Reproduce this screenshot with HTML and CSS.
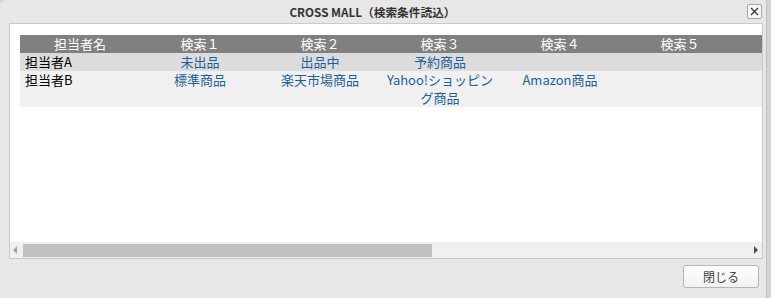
FILE: index.html
```html
<!DOCTYPE html>
<html lang="ja">
<head>
  <meta charset="UTF-8">
  <title>CROSS MALL（検索条件読込）</title>
  <link rel="stylesheet" href="styles.css">
</head>
<body>
  <div class="dialog">
    <div class="titlebar">
      <div class="title">CROSS MALL（検索条件読込）</div>
      <button class="close-x" title="close">
        <svg width="9" height="9" viewBox="0 0 9 9"><path d="M1 1L8 8M8 1L1 8" stroke="#333" stroke-width="1.3"/></svg>
      </button>
    </div>

    <div class="panel">
      <div class="scroll-area">
        <table class="cond-table">
          <thead>
            <tr>
              <th>担当者名</th>
              <th>検索１</th>
              <th>検索２</th>
              <th>検索３</th>
              <th>検索４</th>
              <th>検索５</th>
              <th></th>
              <th></th>
              <th></th>
              <th></th>
              <th></th>
            </tr>
          </thead>
          <tbody>
            <tr class="row-a">
              <td class="name">担当者A</td>
              <td>未出品</td>
              <td>出品中</td>
              <td>予約商品</td>
              <td></td><td></td><td></td><td></td><td></td><td></td><td></td>
            </tr>
            <tr class="row-b">
              <td class="name">担当者B</td>
              <td>標準商品</td>
              <td>楽天市場商品</td>
              <td>Yahoo!ショッピング商品</td>
              <td>Amazon商品</td>
              <td></td><td></td><td></td><td></td><td></td><td></td>
            </tr>
          </tbody>
        </table>
      </div>
      <div class="hscroll">
        <span class="arrow-left"></span>
        <div class="track">
          <div class="thumb"></div>
        </div>
        <span class="arrow-right"></span>
      </div>
    </div>

    <div class="footer">
      <button class="btn">閉じる</button>
    </div>
  </div>
</body>
</html>
```

FILE: styles.css
```css
* {
  margin: 0;
  padding: 0;
  box-sizing: border-box;
}

body {
  background: #d4d4d4;
  font-family: "Noto Sans CJK JP", "Noto Sans", sans-serif;
  font-size: 13px;
  color: #000;
  overflow: hidden;
}

.dialog {
  width: 767px;
  height: 298px;
  background: #e7e7e7;
  border-right: 1px solid #bdbdbd;
  border-top-left-radius: 6px;
  display: flex;
  flex-direction: column;
}

.titlebar {
  height: 23px;
  display: flex;
  align-items: flex-start;
}

.title {
  flex: 1;
  text-align: center;
  font-weight: bold;
  font-size: 11.7px;
  color: #333;
  line-height: 24px;
  padding-left: 4px;
}

.close-x {
  width: 15px;
  height: 15px;
  margin: 4px 4px 0 6px;
  border: 1px solid #a5a5a5;
  border-radius: 2px;
  background: #f7f7f7;
  display: flex;
  align-items: center;
  justify-content: center;
}

.panel {
  height: 236px;
  margin: 0 3px 0 9px;
  border: 1px solid #c9c9c9;
  background: #fff;
  display: flex;
  flex-direction: column;
}

.scroll-area {
  flex: 1;
  overflow: hidden;
  padding: 11px 0 0 10px;
}

.cond-table {
  border-collapse: collapse;
  table-layout: fixed;
  width: 1320px;
}

.cond-table th,
.cond-table td {
  width: 120px;
  height: 18px;
  line-height: 18px;
  padding: 0 5px;
  text-align: center;
  vertical-align: top;
  font-weight: normal;
}

.cond-table th {
  background: #808080;
  color: #fff;
}

.cond-table td {
  color: #1b5f9c;
}

.cond-table td.name {
  text-align: left;
  padding-left: 5px;
  color: #000;
}

.row-a td {
  background: #dcdcdc;
}

.row-b td {
  background: #f0f0f0;
}

.hscroll {
  height: 16px;
  background: #f0f0f0;
  display: flex;
  align-items: center;
}

.arrow-left {
  width: 0;
  height: 0;
  margin: 0 6px 0 3px;
  border-top: 4px solid transparent;
  border-bottom: 4px solid transparent;
  border-right: 4px solid #a3a3a3;
}

.track {
  flex: 1;
  height: 13px;
}

.thumb {
  width: 409px;
  height: 13px;
  background: #c1c1c1;
}

.arrow-right {
  width: 0;
  height: 0;
  margin: 0 4px 0 6px;
  border-top: 4px solid transparent;
  border-bottom: 4px solid transparent;
  border-left: 4px solid #505050;
}

.footer {
  display: flex;
  justify-content: flex-end;
  padding: 6px 7px 0 0;
}

.btn {
  width: 76px;
  height: 23px;
  border: 1px solid #b5b5b5;
  border-radius: 3px;
  background: linear-gradient(#ffffff, #f1f1f1);
  font-family: "Noto Sans CJK JP", "Noto Sans", sans-serif;
  font-size: 12px;
  color: #444;
}
```
